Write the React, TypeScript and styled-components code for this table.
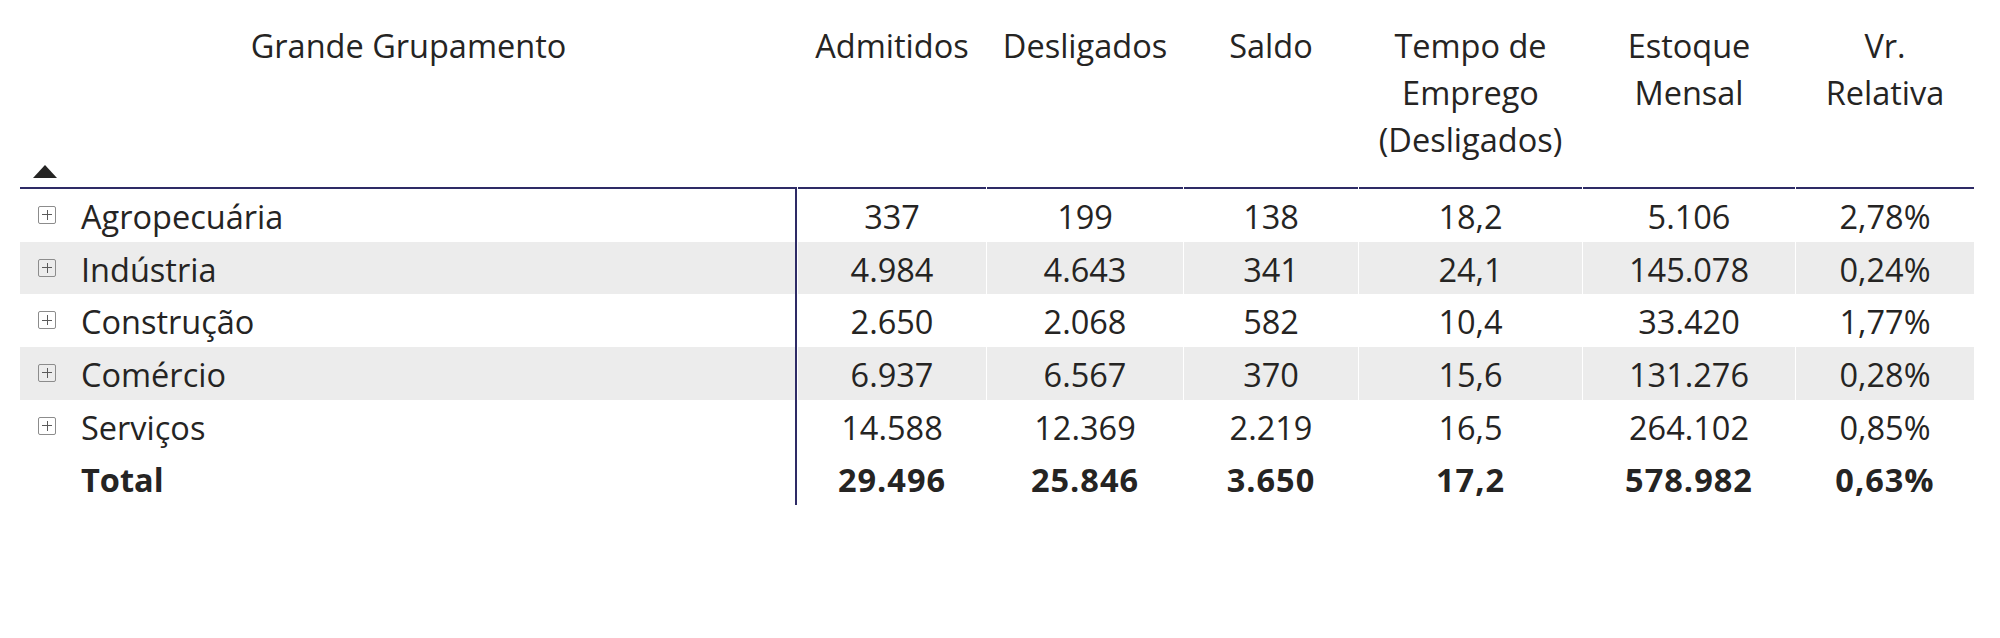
import React from "react";
import styled, { createGlobalStyle, css } from "styled-components";

const GlobalStyle = createGlobalStyle`
  html, body {
    margin: 0;
    padding: 0;
    background: #ffffff;
  }
  body {
    font-family: "Open Sans", "Noto Sans", sans-serif;
    color: #252423;
  }
`;

const NAVY = "#2e2b66";
const SHADE = "#ececec";
const TEMPLATE = "777px 188px 196px 174px 223px 212px 178px";

const Page = styled.div`
  padding-left: 20px;
  width: 1954px;
`;

const Table = styled.div`
  display: flex;
  flex-direction: column;
  width: 1954px;
`;

const HeaderRow = styled.div`
  display: grid;
  grid-template-columns: ${TEMPLATE};
  column-gap: 1px;
  height: 189px;
  background: #ffffff;
`;

const HeaderCell = styled.div`
  box-sizing: border-box;
  display: flex;
  flex-direction: column;
  align-items: center;
  padding-top: 21.5px;
  border-bottom: 2px solid ${NAVY};
  font-size: 32.5px;
  line-height: 47.2px;
  text-align: center;
  color: #252423;
`;

const FirstHeaderCell = styled(HeaderCell)`
  justify-content: space-between;
  align-items: stretch;
`;

const HeaderLine = styled.span`
  display: block;
  white-space: nowrap;
`;

const SortArrow = styled.svg`
  display: block;
  width: 24px;
  height: 13px;
  margin: 0 0 9px 13px;
`;

const Row = styled.div`
  display: grid;
  grid-template-columns: ${TEMPLATE};
  column-gap: 1px;
  height: 52.7px;
  background: #ffffff;
`;

const Cell = styled.div<{ $shaded?: boolean; $bold?: boolean }>`
  box-sizing: border-box;
  display: flex;
  align-items: center;
  justify-content: center;
  padding-top: 2px;
  font-size: 32.5px;
  white-space: nowrap;
  background: ${(p) => (p.$shaded ? SHADE : "transparent")};
  ${(p) =>
    p.$bold &&
    css`
      font-weight: 700;
      letter-spacing: 1px;
    `}
`;

const LabelCell = styled.div<{ $shaded?: boolean; $bold?: boolean }>`
  box-sizing: border-box;
  display: flex;
  align-items: center;
  gap: 25px;
  padding: 2px 0 0 18px;
  font-size: 32.5px;
  white-space: nowrap;
  border-right: 2px solid ${NAVY};
  background: ${(p) => (p.$shaded ? SHADE : "transparent")};
  font-weight: ${(p) => (p.$bold ? 700 : 400)};
`;

const Expander = styled.span<{ $hidden?: boolean }>`
  box-sizing: border-box;
  position: relative;
  flex: none;
  width: 18px;
  height: 18px;
  margin-top: -3px;
  border: 1px solid #8c8c8c;
  border-radius: 2px;
  visibility: ${(p) => (p.$hidden ? "hidden" : "visible")};
  &::before,
  &::after {
    content: "";
    position: absolute;
    background: #5a5a5a;
  }
  &::before {
    left: 3px;
    right: 3px;
    top: 7.5px;
    height: 1px;
  }
  &::after {
    top: 3px;
    bottom: 3px;
    left: 7.5px;
    width: 1px;
  }
`;

const Label = styled.span`
  display: block;
`;

const headers: string[][] = [
  ["Admitidos"],
  ["Desligados"],
  ["Saldo"],
  ["Tempo de", "Emprego", "(Desligados)"],
  ["Estoque", "Mensal"],
  ["Vr.", "Relativa"],
];

const rows: { name: string; values: string[] }[] = [
  { name: "Agropecuária", values: ["337", "199", "138", "18,2", "5.106", "2,78%"] },
  { name: "Indústria", values: ["4.984", "4.643", "341", "24,1", "145.078", "0,24%"] },
  { name: "Construção", values: ["2.650", "2.068", "582", "10,4", "33.420", "1,77%"] },
  { name: "Comércio", values: ["6.937", "6.567", "370", "15,6", "131.276", "0,28%"] },
  { name: "Serviços", values: ["14.588", "12.369", "2.219", "16,5", "264.102", "0,85%"] },
];

const total = ["29.496", "25.846", "3.650", "17,2", "578.982", "0,63%"];

export default function App() {
  return (
    <>
      <GlobalStyle />
      <Page>
        <Table>
          <HeaderRow>
            <FirstHeaderCell>
              <HeaderLine>Grande Grupamento</HeaderLine>
              <SortArrow viewBox="0 0 24 13">
                <polygon points="12,0 24,13 0,13" fill="#252423" />
              </SortArrow>
            </FirstHeaderCell>
            {headers.map((lines, i) => (
              <HeaderCell key={i}>
                {lines.map((l) => (
                  <HeaderLine key={l}>{l}</HeaderLine>
                ))}
              </HeaderCell>
            ))}
          </HeaderRow>
          {rows.map((r, i) => {
            const shaded = i % 2 === 1;
            return (
              <Row key={r.name}>
                <LabelCell $shaded={shaded}>
                  <Expander />
                  <Label>{r.name}</Label>
                </LabelCell>
                {r.values.map((v, j) => (
                  <Cell key={j} $shaded={shaded}>
                    {v}
                  </Cell>
                ))}
              </Row>
            );
          })}
          <Row>
            <LabelCell $bold>
              <Expander $hidden />
              <Label>Total</Label>
            </LabelCell>
            {total.map((v, j) => (
              <Cell key={j} $bold>
                {v}
              </Cell>
            ))}
          </Row>
        </Table>
      </Page>
    </>
  );
}
